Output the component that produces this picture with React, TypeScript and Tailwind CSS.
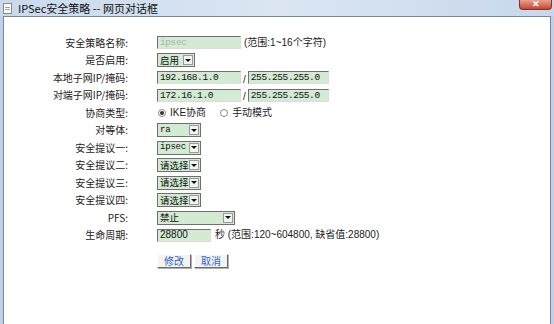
import React from 'react';

const cjk = "font-['SimSun','Noto_Sans_CJK_SC',sans-serif]";

function Label({ text }: { text: string }) {
  return (
    <div className={`w-[123px] shrink-0 text-right text-[10px] leading-none text-[#222] ${cjk}`}>
      {text}
    </div>
  );
}

function TextBox({ value, width, mono = true, disabled = false }: { value: string; width: string; mono?: boolean; disabled?: boolean }) {
  return (
    <div
      className={`${width} h-[13px] flex items-center pl-[2px] bg-[#d3ead3] border border-t-[#707070] border-l-[#707070] border-b-[#dcdcdc] border-r-[#dcdcdc] leading-none overflow-hidden whitespace-nowrap
        ${mono ? "font-['Liberation_Mono',monospace] text-[9.5px] tracking-[-0.4px]" : "font-['Liberation_Sans','Noto_Sans_CJK_SC',sans-serif] text-[10px]"}
        ${disabled ? 'text-[#a8b8a8]' : 'text-[#111]'}`}
    >
      {value}
    </div>
  );
}

function Select({ value, width, mono = false }: { value: string; width: string; mono?: boolean }) {
  return (
    <div className={`${width} h-[14px] flex items-stretch bg-[#d3ead3] border border-[#6f6f6f] leading-none`}>
      <div
        className={`flex-1 min-w-0 whitespace-nowrap flex items-center pl-[2px] pr-[1px] text-[#111] ${
          mono ? "font-['Liberation_Mono',monospace] text-[9px] tracking-[-0.2px]" : `${cjk} text-[9.5px]`
        }`}
      >
        {value}
      </div>
      <div className="w-[10px] shrink-0 my-[1px] mr-[1px] flex items-center justify-center bg-[#f2f2f2] border border-[#9a9a9a]">
        <div className="w-0 h-0 border-l-[3px] border-r-[3px] border-t-[3px] border-l-transparent border-r-transparent border-t-[#111]" />
      </div>
    </div>
  );
}

function Radio({ checked, label }: { checked: boolean; label: string }) {
  return (
    <div className="flex items-center gap-[4px]">
      <div className="w-[8px] h-[8px] rounded-full border border-[#8a8a8a] bg-white flex items-center justify-center">
        {checked && <div className="w-[4px] h-[4px] rounded-full bg-[#333]" />}
      </div>
      <span className={`text-[10px] leading-none text-[#222] font-['Liberation_Sans','Noto_Sans_CJK_SC',sans-serif]`}>{label}</span>
    </div>
  );
}

function Row({ label, children }: { label: string; children: React.ReactNode }) {
  return (
    <div className="h-[17.5px] flex items-center">
      <Label text={label} />
      <div className="ml-[29px] flex items-center">{children}</div>
    </div>
  );
}

function Btn({ text }: { text: string }) {
  return (
    <div
      className={`w-[34px] h-[14px] flex items-center justify-center bg-[#f4f4f4] border border-t-[#ffffff] border-l-[#ffffff] border-b-[#6a6a6a] border-r-[#6a6a6a] shadow-[1px_1px_0_#b0b0b0] text-[10px] leading-none text-[#2f62c8] ${cjk}`}
    >
      {text}
    </div>
  );
}

export default function App() {
  const note = "font-['Liberation_Sans','Noto_Sans_CJK_SC',sans-serif] text-[10px] leading-none text-[#222] whitespace-nowrap";

  return (
    <div className="w-[554px] h-[324px] flex flex-col bg-[#bcd2ea] overflow-hidden">
      {/* title bar */}
      <div className="h-[16px] shrink-0 relative flex items-center bg-linear-to-r from-[#c9d9ec] via-[#dbe6f2] to-[#c6d8ec]">
        <div className="ml-[3px] w-[9px] h-[11px] bg-white border border-[#8a8a8a] relative">
          <div className="absolute top-[3px] left-[1px] w-[5px] h-[1px] bg-[#9aa]" />
          <div className="absolute top-[5px] left-[1px] w-[5px] h-[1px] bg-[#9aa]" />
        </div>
        <span className={`ml-[6px] text-[11px] leading-none text-[#111] ${cjk}`}>IPSec安全策略 -- 网页对话框</span>
        <div className="absolute right-[2px] top-0 w-[33px] h-[10px] rounded-b-[4px] bg-linear-to-b from-[#e8a08f] to-[#c4442c] border border-t-0 border-[#8c3020] flex items-center justify-center">
          <span className="text-white text-[9px] font-bold leading-none font-['Liberation_Sans',sans-serif]">✕</span>
        </div>
      </div>

      {/* client area */}
      <div className="flex-1 ml-[3px] mr-[3px] border-l border-r border-t border-[#7b8898] bg-white">
        <div className="pt-[17px] pl-[1px]">
          <Row label="安全策略名称:">
            <TextBox value="ipsec" width="w-[84px]" disabled />
            <span className={`ml-[3px] ${note}`}>(范围:1~16个字符)</span>
          </Row>
          <Row label="是否启用:">
            <Select value="启用" width="w-[38px]" />
          </Row>
          <Row label="本地子网IP/掩码:">
            <TextBox value="192.168.1.0" width="w-[84px]" />
            <span className={`mx-[2px] mt-[4px] ${note}`}>/</span>
            <TextBox value="255.255.255.0" width="w-[81px]" />
          </Row>
          <Row label="对端子网IP/掩码:">
            <TextBox value="172.16.1.0" width="w-[84px]" />
            <span className={`mx-[2px] mt-[4px] ${note}`}>/</span>
            <TextBox value="255.255.255.0" width="w-[81px]" />
          </Row>
          <Row label="协商类型:">
            <div className="flex items-center gap-[14px] pl-[1px]">
              <Radio checked label="IKE协商" />
              <Radio checked={false} label="手动模式" />
            </div>
          </Row>
          <Row label="对等体:">
            <Select value="ra" width="w-[44px]" mono />
          </Row>
          <Row label="安全提议一:">
            <Select value="ipsec" width="w-[44px]" mono />
          </Row>
          <Row label="安全提议二:">
            <Select value="请选择" width="w-[44px]" />
          </Row>
          <Row label="安全提议三:">
            <Select value="请选择" width="w-[44px]" />
          </Row>
          <Row label="安全提议四:">
            <Select value="请选择" width="w-[44px]" />
          </Row>
          <Row label="PFS:">
            <Select value="禁止" width="w-[78px]" />
          </Row>
          <Row label="生命周期:">
            <TextBox value="28800" width="w-[54px]" mono={false} />
            <span className={`ml-[4px] ${note}`}>秒 (范围:120~604800, 缺省值:28800)</span>
          </Row>
          <div className="mt-[10px] ml-[152px] flex gap-[3px]">
            <Btn text="修改" />
            <Btn text="取消" />
          </div>
        </div>
      </div>
    </div>
  );
}
